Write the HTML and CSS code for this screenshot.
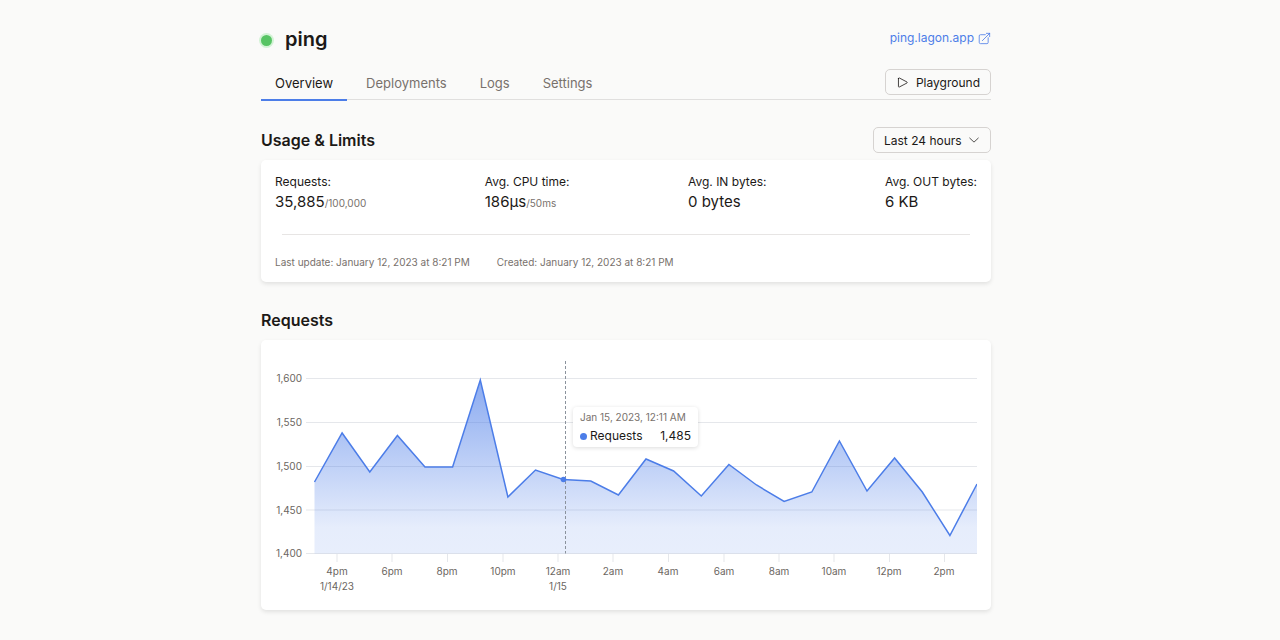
FILE: index.html
```
<!DOCTYPE html>
<html lang="en">
<head>
<meta charset="UTF-8">
<meta name="viewport" content="width=device-width, initial-scale=1.0">
<title>ping</title>
<link rel="stylesheet" href="styles.css">
</head>
<body>
  <div class="container">
    <header class="header">
      <div class="title">
        <span class="status"></span>
        <h1>ping</h1>
      </div>
      <a class="link" href="#">ping.lagon.app
        <svg class="icon" viewBox="0 0 24 24" width="13" height="13"><path d="M13.5 5H4.500A2.250 2.250 0 002.250 7.250v12A2.250 2.250 0 004.500 21.500h12A2.250 2.250 0 0018.750 19.250V10.500M8 16L21.500 2.500m0 0h-6M21.500 2.500v6"/></svg>
      </a>
    </header>

    <div class="toolbar">
      <nav class="tabs">
        <a class="tab active" href="#">Overview</a>
        <a class="tab" href="#">Deployments</a>
        <a class="tab" href="#">Logs</a>
        <a class="tab" href="#">Settings</a>
      </nav>
      <button class="button" type="button">
        <svg class="icon" viewBox="0 0 24 24" width="13" height="13"><path d="M4.500 4.650c0-.86.92-1.400 1.670-.99l14 7.350a1.120 1.120 0 010 1.970L6.170 20.330a1.120 1.120 0 01-1.670-.99V4.650z"/></svg>
        Playground
      </button>
    </div>

    <main>
      <section>
        <div class="section-head">
          <h2>Usage &amp; Limits</h2>
          <div class="select">
            <select aria-label="Timeframe">
              <option>Last 24 hours</option>
              <option>Last 7 days</option>
              <option>Last 30 days</option>
            </select>
            <svg class="icon chevron" viewBox="0 0 24 24" width="12" height="12"><path d="M20.500 8.250l-8.500 8-8.500-8"/></svg>
          </div>
        </div>
        <div class="card">
          <dl class="stats">
            <div><dt>Requests:</dt><dd>35,885<small>/100,000</small></dd></div>
            <div><dt>Avg. CPU time:</dt><dd>186μs<small>/50ms</small></dd></div>
            <div><dt>Avg. IN bytes:</dt><dd>0 bytes</dd></div>
            <div><dt>Avg. OUT bytes:</dt><dd>6 KB</dd></div>
          </dl>
          <hr>
          <div class="dates">
            <span>Last update: January 12, 2023 at 8:21 PM</span>
            <span>Created: January 12, 2023 at 8:21 PM</span>
          </div>
        </div>
      </section>

      <section>
        <div class="section-head">
          <h2>Requests</h2>
        </div>
        <div class="card chart">
          <svg viewBox="0 0 702 242" role="img" aria-label="Requests">
            <defs>
              <linearGradient id="fill" x1="0" y1="0" x2="0" y2="1">
                <stop offset="0" stop-color="#4c7de8" stop-opacity="0.65"/>
                <stop offset="0.85" stop-color="#4c7de8" stop-opacity="0.14"/>
                <stop offset="1" stop-color="#4c7de8" stop-opacity="0.13"/>
              </linearGradient>
            </defs>
            <path class="grid" d="M31 24.500H702.500M31 68.500H702.500M31 112.500H702.500M31 156H702.500M31 199.500H702.500"/>
            <path class="grid" d="M62 200v8M117 200v8M172.500 200v8M228 200v8M283 200v8M338 200v8M393.500 200v8M449 200v8M504 200v8M559 200v8M614.500 200v8M669.500 200v8"/>
            <path fill="url(#fill)" d="M39.500 199.500V128L67.100 79 94.800 118 122.400 81.500 150 113H177.600L205.300 26 232.900 143 260.500 116 288.100 125.500 315.800 127 343.400 141 371 105 398.600 117 426.300 142 453.900 110.500 481.500 131 509.100 147.500 536.800 138 564.400 87 592 137 619.600 104 647.300 138 674.900 181.500 702 130V199.500Z"/>
            <polyline class="line" points="39.500,128 67.100,79 94.800,118 122.400,81.500 150,113 177.600,113 205.300,26 232.900,143 260.500,116 288.100,125.500 315.800,127 343.400,141 371,105 398.600,117 426.300,142 453.900,110.500 481.500,131 509.100,147.500 536.800,138 564.400,87 592,137 619.600,104 647.300,138 674.900,181.500 702,130"/>
            <path class="cursor" d="M290.500 7V199.500"/>
            <circle cx="288.500" cy="125.500" r="2.800" fill="#4c7de8"/>
            <g class="y-axis">
              <text x="27" y="28">1,600</text>
              <text x="27" y="72">1,550</text>
              <text x="27" y="116">1,500</text>
              <text x="27" y="160">1,450</text>
              <text x="27" y="203">1,400</text>
            </g>
            <g class="x-axis">
              <text x="62" y="221">4pm</text>
              <text x="62" y="236">1/14/23</text>
              <text x="117" y="221">6pm</text>
              <text x="172" y="221">8pm</text>
              <text x="228" y="221">10pm</text>
              <text x="283" y="221">12am</text>
              <text x="283" y="236">1/15</text>
              <text x="338" y="221">2am</text>
              <text x="393" y="221">4am</text>
              <text x="449" y="221">6am</text>
              <text x="504" y="221">8am</text>
              <text x="559" y="221">10am</text>
              <text x="614" y="221">12pm</text>
              <text x="669" y="221">2pm</text>
            </g>
          </svg>
          <div class="tooltip">
            <div class="tooltip-date">Jan 15, 2023, 12:11 AM</div>
            <div class="tooltip-row">
              <span class="dot"></span>
              <span>Requests</span>
              <span class="value">1,485</span>
            </div>
          </div>
        </div>
      </section>
    </main>
  </div>
</body>
</html>
```
FILE: styles.css
```
* {
  box-sizing: border-box;
}
body {
  margin: 0;
  padding: 24px 28px 30px 0;
  background-color: #fafaf9;
  color: #1c1917;
  font-family: Inter, "Liberation Sans", sans-serif;
  font-size: 12px;
  line-height: 16px;
}
h1, h2, dl, dd {
  margin: 0;
}
a {
  text-decoration: none;
}
.container {
  max-width: 730px;
  margin: 0 auto;
}
.icon {
  fill: none;
  stroke: currentColor;
  stroke-width: 1.5;
  stroke-linecap: round;
  stroke-linejoin: round;
}

.header {
  display: flex;
  justify-content: space-between;
  align-items: center;
  height: 30px;
}
.title {
  display: flex;
  align-items: center;
  gap: 13px;
}
.status {
  width: 11px;
  height: 11px;
  margin-top: 2px;
  border-radius: 50%;
  background-color: #57c464;
  box-shadow: 0 0 0 2px #d3f3d6;
}
h1 {
  font-size: 20px;
  line-height: 30px;
  font-weight: 600;
}
.link {
  display: flex;
  align-items: center;
  gap: 4px;
  padding-bottom: 2px;
  color: #4c7de8;
}

.toolbar {
  display: flex;
  justify-content: space-between;
  align-items: flex-start;
  margin-top: 12px;
  border-bottom: 1px solid #e0dfde;
}
.tabs {
  display: flex;
  gap: 5px;
}
.tab {
  padding: 8px 14px 7px;
  margin-bottom: -2px;
  font-size: 13px;
  line-height: 18px;
  color: #78716c;
}
.tab.active {
  color: #1c1917;
  border-bottom: 2px solid #4c7de8;
}
.button,
.select select {
  height: 26px;
  border: 1px solid #d6d3d1;
  border-radius: 5px;
  background-color: transparent;
  color: #1c1917;
  font-family: inherit;
  font-size: 12px;
}
.button {
  display: flex;
  align-items: center;
  gap: 7px;
  margin-top: 3px;
  padding: 0 10px;
}
.select {
  position: relative;
}
.select select {
  display: block;
  appearance: none;
  padding: 0 28px 0 10px;
}
.chevron {
  position: absolute;
  right: 11px;
  top: 7px;
  pointer-events: none;
}

main {
  padding-top: 2px;
}
.section-head {
  display: flex;
  justify-content: space-between;
  align-items: center;
  height: 28px;
  margin: 24px 0 6px;
}
h2 {
  font-size: 16px;
  line-height: 24px;
  font-weight: 600;
}
.card {
  padding: 14px;
  background-color: #fff;
  border-radius: 5px;
  box-shadow: 0 2px 4px rgba(0, 0, 0, 0.1);
}
.stats {
  display: flex;
  justify-content: space-between;
}
dd {
  font-size: 15px;
  line-height: 24px;
}
dd small {
  font-size: 10px;
  color: #78716c;
}
hr {
  height: 1px;
  margin: 19px 7px 21px;
  border: none;
  background-color: #e7e5e4;
}
.dates {
  display: flex;
  gap: 27px;
  font-size: 10px;
  line-height: 12px;
  color: #78716c;
}

.chart {
  position: relative;
}
.chart svg {
  display: block;
  width: 100%;
}
.grid {
  fill: none;
  stroke: #e5e7eb;
}
.line {
  fill: none;
  stroke: #4c7de8;
  stroke-width: 1.5;
}
.cursor {
  stroke: #8b929c;
  stroke-dasharray: 3 2;
}
.chart text {
  font-size: 10px;
  fill: #6b6661;
}
.y-axis {
  text-anchor: end;
}
.x-axis {
  text-anchor: middle;
}
.tooltip {
  position: absolute;
  left: 312px;
  top: 67px;
  min-width: 125px;
  padding: 1px 7px 3px;
  background-color: #fff;
  border-radius: 4px;
  box-shadow: 0 1px 4px rgba(0, 0, 0, 0.14);
}
.tooltip-date {
  margin-bottom: 2px;
  font-size: 10px;
  line-height: 18px;
  color: #78716c;
}
.tooltip-row {
  display: flex;
  align-items: center;
  gap: 3px;
}
.dot {
  width: 7px;
  height: 7px;
  border-radius: 50%;
  background-color: #4c7de8;
}
.value {
  margin-left: auto;
}
```
